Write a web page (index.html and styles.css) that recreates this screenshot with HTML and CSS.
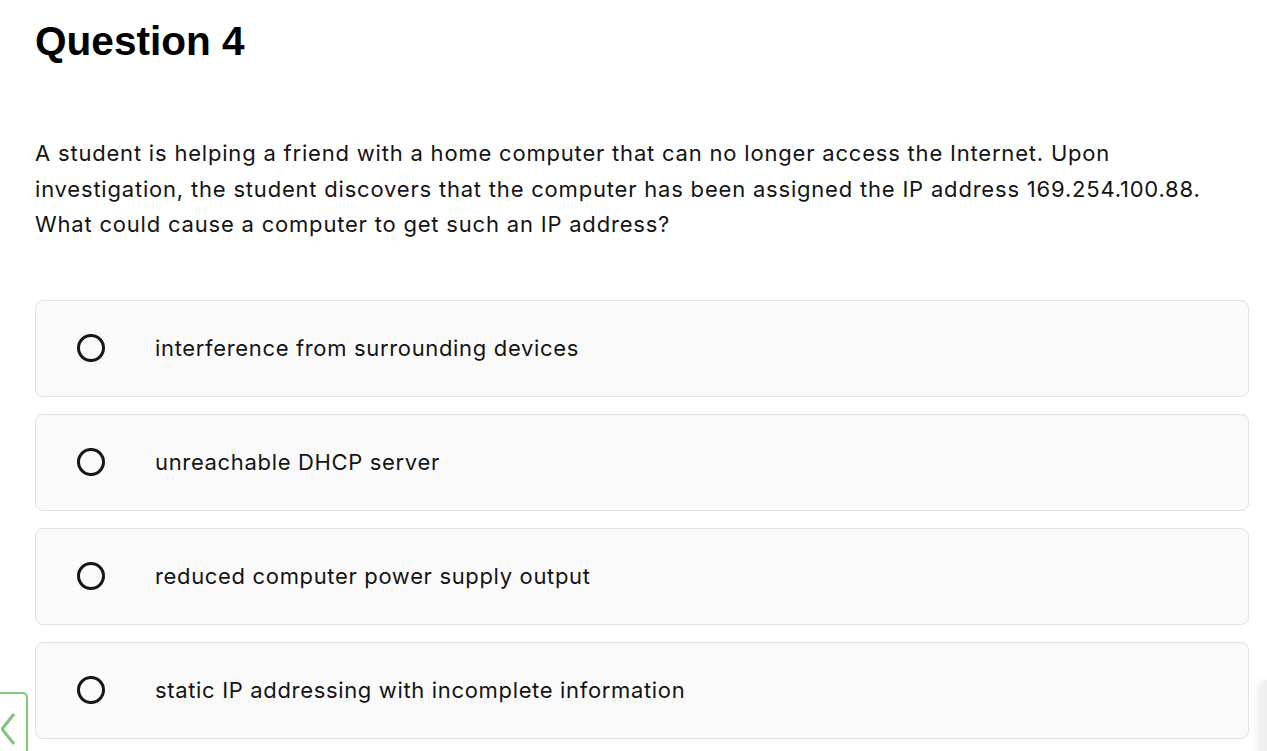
FILE: index.html
```html
<!DOCTYPE html>
<html>
<head>
<meta charset="utf-8">
<link rel="stylesheet" href="styles.css">
</head>
<body>
<main class="page">
  <h1 class="title">Question 4</h1>
  <p class="question">A student is helping a friend with a home computer that can no longer access the Internet. Upon investigation, the student discovers that the computer has been assigned the IP address 169.254.100.88. What could cause a computer to get such an IP address?</p>
  <div class="options">
    <div class="option"><span class="radio"></span><span class="label">interference from surrounding devices</span></div>
    <div class="option"><span class="radio"></span><span class="label">unreachable DHCP server</span></div>
    <div class="option"><span class="radio"></span><span class="label">reduced computer power supply output</span></div>
    <div class="option"><span class="radio"></span><span class="label">static IP addressing with incomplete information</span></div>
  </div>
</main>
<div class="back-btn">
  <svg width="20" height="40" viewBox="0 0 20 40"><polyline points="13,4 1,19 13,34" fill="none" stroke="#82c57c" stroke-width="3.2"/></svg>
</div>
<div class="side-shadow"></div>
</body>
</html>
```

FILE: styles.css
```css
html, body {
  margin: 0;
  padding: 0;
  background: #ffffff;
  overflow: hidden;
}
body {
  width: 1267px;
  height: 751px;
  position: relative;
}
.page {
  padding: 0 18px 0 35px;
}
.title {
  margin: 0;
  padding-top: 17px;
  font-family: "Liberation Sans", Arial, sans-serif;
  font-weight: 700;
  font-size: 40.6px;
  line-height: 48px;
  color: #000;
}
.question {
  margin: 71px 0 0 0;
  max-width: 1190px;
  font-family: Inter, "Noto Sans", sans-serif;
  font-size: 22px;
  letter-spacing: 0.8px;
  line-height: 35.6px;
  color: #141414;
}
.options {
  margin-top: 57px;
  display: flex;
  flex-direction: column;
  gap: 17px;
}
.option {
  box-sizing: border-box;
  height: 97px;
  border: 1px solid #e2e2e2;
  border-radius: 8px;
  background: #fafafa;
  display: flex;
  align-items: center;
}
.radio {
  width: 28px;
  height: 28px;
  box-sizing: border-box;
  border: 3px solid #161616;
  border-radius: 50%;
  margin-left: 41px;
  flex: none;
}
.label {
  margin-left: 50px;
  font-family: Inter, "Noto Sans", sans-serif;
  font-size: 22px;
  letter-spacing: 0.66px;
  color: #141414;
}
.back-btn {
  position: absolute;
  left: -6px;
  top: 692px;
  width: 30px;
  height: 70px;
  border: 2px solid #82c57c;
  border-radius: 5px;
  background: #fff;
  display: flex;
  align-items: flex-start;
}
.back-btn svg {
  margin-top: 16px;
  margin-left: 5px;
}
.side-shadow {
  position: absolute;
  left: 1258px;
  top: 680px;
  width: 20px;
  height: 80px;
  border-radius: 10px 0 0 0;
  background: linear-gradient(to right, #f3f3f3, #e9e9e9);
  box-shadow: -2px 0 6px rgba(0,0,0,0.06);
}
```
